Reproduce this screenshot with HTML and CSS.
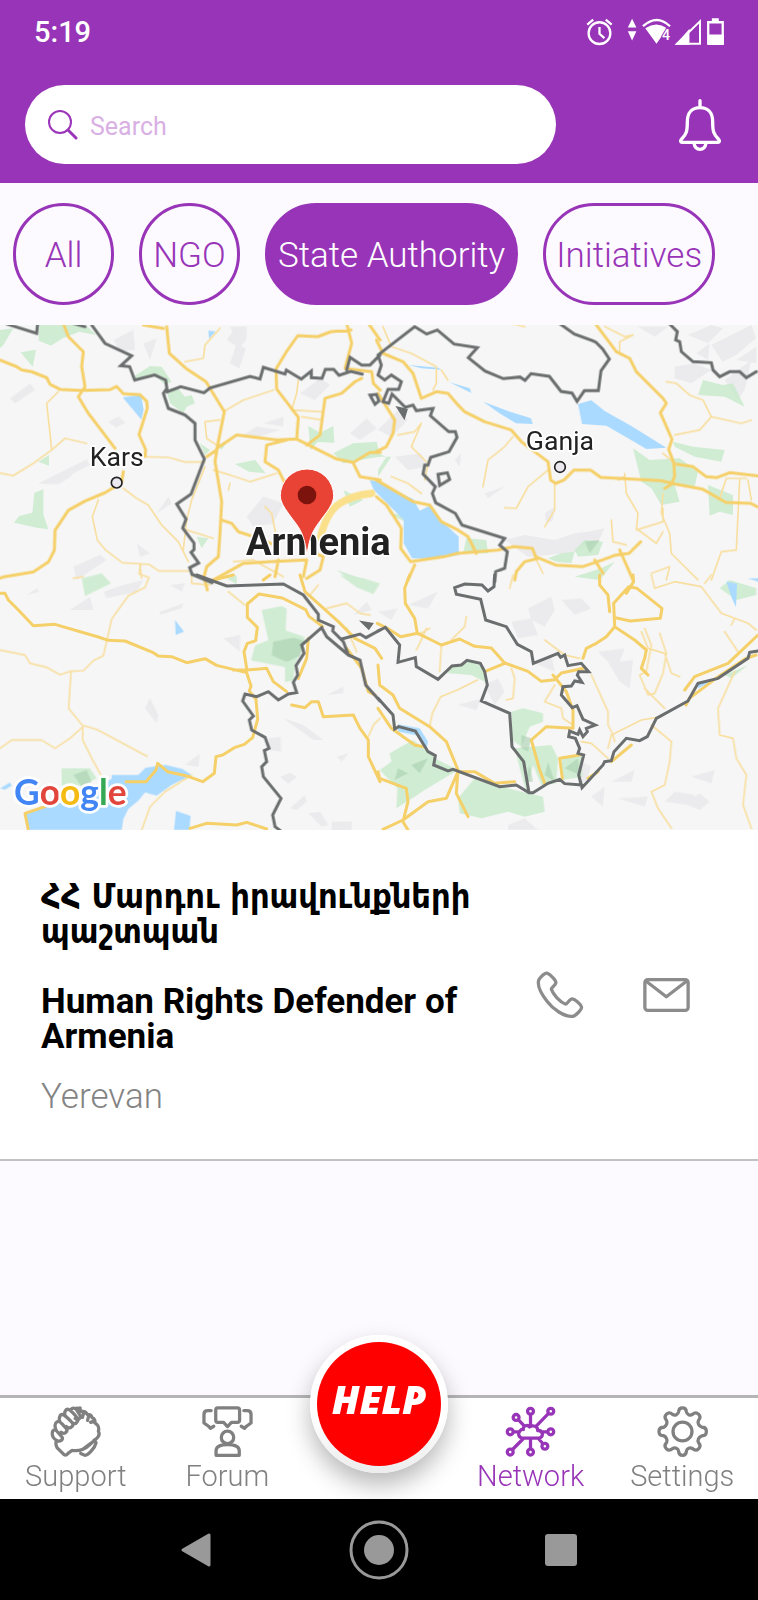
FILE: index.html
```html
<!DOCTYPE html>
<html lang="en">
<head>
<meta charset="utf-8">
<meta name="viewport" content="width=device-width, initial-scale=1">
<title>Network</title>
<link rel="stylesheet" href="styles.css">
</head>
<body>
<header class="header">
  <div class="status">
    <span class="time">5:19</span>
    <svg class="status-icons" viewBox="76 50 422 88" aria-hidden="true">
      <g fill="none" stroke="#fff" stroke-width="7">
        <circle cx="117" cy="99" r="33"/>
        <path d="M117 80v21l15 13M80 73l18-15M136 58l18 15"/>
        <path d="M249 78q42-38 82 0" stroke-width="7"/>
        <path d="M422 63v68h-70z" stroke-width="6"/>
        <path d="M447 66h44v65h-44z" stroke-width="7"/>
      </g>
      <path fill="#fff" d="M216 55l13 27h-26zM203 93h26l-13 28zM256 84q34-22 66 0l-8 10-12 20-12 17zM348 134l42-48v48zM458 54h21v10h-21zM446 103h48v32h-48z"/>
      <text x="307" y="119" class="wifi-mark">4</text>
    </svg>
  </div>
  <div class="search-row">
    <label class="search">
      <svg viewBox="0 0 30 30" width="30" height="30" aria-hidden="true"><circle cx="12" cy="12" r="11" fill="none" stroke="#9a34b8" stroke-width="2"/><path d="M20 20l8 8" stroke="#9a34b8" stroke-width="3" stroke-linecap="round"/></svg>
      <input type="search" placeholder="Search" aria-label="Search">
    </label>
    <button class="bell" aria-label="Notifications">
      <svg viewBox="356 295 126 156" width="42" height="52"><path d="M419 300v19M419 321c-26 0-38 18-38 42 0 30-3 38-17 52-5 6-4 10 2 10h106c6 0 7-4 2-10-14-14-17-22-17-52 0-24-12-42-38-42zM401 428c4 24 32 24 36 0" fill="none" stroke="#fff" stroke-width="10" stroke-linecap="round" stroke-linejoin="round"/></svg>
    </button>
  </div>
</header>

<nav class="chips" aria-label="Categories">
  <button class="chip">All</button>
  <button class="chip">NGO</button>
  <button class="chip active" aria-pressed="true">State Authority</button>
  <button class="chip">Initiatives</button>
</nav>

<svg class="map" viewBox="0 0 2274 1515" role="img" aria-label="Map of Armenia">
  <rect width="2274" height="1515" fill="#f6f6f6"/>
  <!-- terrain shading -->
  <g class="hill">
    <g transform="translate(0 -15)">
      <path d="M340 60l60-30 5 60-45 5zM680 60l30-40 25 30-15 35zM430 70l40-15-20 65zM30 235l60-45 15 20-60 40zM325 305l30-15 22 18-30 15zM115 490l90-45 60-30-60 60-30 18zM260 420l-40 40 50-25zM900 220l60-45 30 20-45 45zM720 350l50-30 70 10-80 25zM790 310l60-20v30zM740 590l50-60 60 20-30 60-60 10zM220 740l80-35 20 15-90 60zM410 670l40 30-30 10zM470 580l35-50 10 20zM690 130l20-60 28 15-20 60zM1050 340l50-45 30 30-50 35zM690 20h50v40l-20 20z"/>
    </g>
    <g transform="translate(1134 -15)">
      <path d="M380 660l60-15 90 15 60-20 40-5 50-10-20 40-60 30-90 10-60 5zM890 140l60-10 50 20-60 40-50-15zM930 45l70-30 35 10-45 45zM1000 75l60-30 60-30 14 40-60 50-40 20zM955 100l40-30-5 50zM1075 120l60-40v50zM1040 180l80-60-20 90-20 30zM500 580l30-20-5 40-20 12zM320 520l60-20-50 35zM230 420l20-20-5 40zM780 20h90l-40 30zM0 330l60-60 30 30-50 50zM50 410l80-10 20 40-60 10z"/>
    </g>
    <g transform="translate(0 750)">
      <path d="M310 50l60-20 60-15-20 35-90 20zM210 105l60-40 10 40zM80 60l30-20 8 10zM480 110l70-25-5 15-65 20zM670 190l50-10v50zM435 400l15-30 25 50-5 25zM850 430l60 20 60 45h-30zM555 570l45-35-5 40zM805 490l38-5v45l-35-5zM840 605l30-12 20 12-25 22zM870 700l45-40 5 20-30 25zM1010 545l35-10-20 25zM925 715l35-5 25 40-20 5zM980 360l50-25v20zM1060 120l40-40 15 25zM510 30l45-5-10 25zM995 740h60v25h-60z"/>
    </g>
    <g transform="translate(1134 750)">
      <path d="M450 100l70-35 10 40-30 50-40-20zM550 75l60-5 30 30-50 20zM400 140l60-10 20 50-60 10zM660 230l80-10-15 40 40-5-10 85-30-20-35-60zM320 330l40-20 20 40-30 40zM460 260l60-20 10 50zM600 555l40 20-15 40-25 20zM640 665l40-30-5 60zM700 620l70-35-10 35zM720 670l90-5-10 30zM860 680l30-30 60 10-20 30zM915 685l50-30 30 25-30 25zM940 605l70-20-10 40zM390 750l50-20 40 35h-90zM240 390l70-20-15 35zM90 90l90-40-30 50zM0 110l60-10-20 35z"/>
    </g>
  </g>
  <!-- forests -->
  <g class="park">
    <g transform="translate(0 -15)">
      <path d="M0 30l40-5-30 50-10 10zM118 15h140l30 30-50-10-50 20-35 22-37-15zM62 97l46-8-10 52zM103 518l27-10v75l15 45-35-5-68-15 15-20 40-10zM115 425l32-20v32zM400 170l50-32 35 2 30 45-20 10-30-30-60 15zM500 210l30-10 25 30 20-5 10 25-25 10-10 20-40-30zM925 318l35 20 40-20 3 50-50-2-22 25zM1000 400l60-30 70-5 10 45-60 10-50 10zM705 432l60-12 32 40-50-5zM600 370l30 20-15 15zM655 375l30-15-20 30zM590 650l35 5-20 30zM1030 510l60 30-40 20zM1010 750l60 20 30 10h-50z"/>
    </g>
    <g transform="translate(1134 -15)">
      <path d="M975 180l60 15 30-5 35 70-60-30-80-5zM885 365l60 15 95 10-10 35-80-15-60-30zM765 385l50 35 90-5 55 40-10 45-60-5 15 50-55 10-30-50-30-20zM990 495l75 30v60l-40-10-30 12zM0 410h40l-40 60zM0 400v50l25-40zM265 655l60 5 5 40h-75zM590 690l30-30 55 5-15 40-60 5zM510 715l40-15 40-5-10 35-45-5zM590 770l80-25 40-20-45 55zM30 580l50 5v20z"/>
    </g>
    <g transform="translate(0 750)">
      <path d="M785 105l60-12 15 8-3 65 58 20-15 50-15 30-5 50-25 5v-45l-102-20 12-45 40-15zM245 10l60-15 28 30-78 38zM185 580h85l20 30-45 22h-60zM1020 0l70 10 50 15-20 32-50-20zM680 10l30-10v28z"/>
    </g>
    <g transform="translate(1134 750)">
      <path d="M215 280l60-20 45 15v45l-40-20-70-5zM35 535l70-40 75 60 60 30-100 60-30 20-55 35 3-60-53-55 35-25zM240 670l50-60 60 20 100 25 45 10 5 45-60 15-50-15-80 20-65-15zM400 410l35-10 60 15v25l-40 15-25 60-28-20zM410 520l110-10 20 40-5 75-45 5-25-60-20 80-20-70zM550 545l60-5 3 65-60 10zM1025 40l30-25 80 25v20l-60 15zM1040 300l70-30-50 40zM590 5l70-5v10z"/>
    </g>
  </g>
  <g class="park-deep">
    <path d="M820 950l60-12 35 10-15 45-40 18-45-20zM220 1350l40-15 15 35-30 15z"/>
    <path transform="translate(1134 750)" d="M100 570l50-20-25 45zM60 580l30 15-40 20zM430 480l30 10-10 40-20-10zM510 560l20 60-30-20zM560 580l40-30 5 50zM440 620l15-50 10 50z"/>
    <path transform="translate(1134 -15)" d="M620 665l45-5-30 40z"/>
  </g>
  <!-- lakes -->
  <g class="water">
    <g transform="translate(0 -15)"><path d="M368 232l55-8 8 45-7 30zM625 32l22 2-20 22z"/></g>
    <g transform="translate(1134 -15)"><path d="M-25 480l30 5 50 30 50 22 20 35 30-15 35 45 52 48v55l-75 12-65-2-25-45v-70l-50-50-40-40zM90 135l90 8 10 6-60-4zM215 187l60 18 5 14zM316 245l80 30 63 20 5 17-50-2-50-30zM600 252l40-11 40 32 80 45 105 65-60 4-60-35-60-35-73-5z"/></g>
    <g transform="translate(0 750)"><path d="M525 135l27 35-25 10zM0 640l30-18 5 10-20 12zM335 600h80l22-22 60-8 50 12 28 18-60 30-45 32-35-10-20 25-30 25-15 30-5 33H85l-10-50 60-20 80-20 60-20 60-45zM528 708l44 15-4 42h-46z"/></g>
    <g transform="translate(1134 750)"><path d="M60 448l65 12 25 40-5 25-30-45-55-10zM1045 20l32 6-3 70-12-25zM1110 10h30v10zM960 325l60-15-60 30z"/></g>
  </g>
  <!-- minor roads -->
  <g class="minor">
    <g transform="translate(0 -15)">
      <path d="M175 215l-35 35 10 90 5 50-55 40-60 37-40-8M155 390l40-35 65 15M435 410l70 2 50 14h60M370 505l40 30 35 20 40 60 50 50 30 60M295 540l-18 50 15 70 25 30 50 38 80 5 30 20h90M660 25l-45 50-5 40-55 10M820 210l-90 30-60 35M660 300l-45 5 5 50 30 20M640 450l50 15 60 20 80-25M690 490l-5 20M615 440l-40 100-15 60-10 90M795 560l20 20 12 60M895 180l-5 40-15 50 90 5M905 290l60 10M560 630l80 25M420 735l5 40M700 725l60-5 90 50"/>
    </g>
    <g transform="translate(1134 -15)">
      <path d="M15 20l25 60 60 20 75 40v50l-10 20M190 150l20 30M405 350l-25 30-50 40-15 80M510 450l-60 50-35 65-35-2M530 490v80l-30 50M60 345l50-10 20-25M130 310l-30 70 50 50-10 50M40 470l50 20 40 30M740 460l5 60 35 60-5 50 80-25v-40M775 625l60 45 20-35M855 520l-5 60 25 60 5 60 80 80M700 600l5 65 40 10M680 20l60 30 25-5-40 20v30M865 185l30 5 40 35 40 15 25 50-35 40-75 15M1000 290l90 20 30-10M1105 475h-60l-20 60M1085 480l-10 210-45 5-30 85M1110 480l10 60M820 760l55-20-10 40M855 400l35 30M740 470l-20 10M475 720l20 40M400 10l40 10"/>
    </g>
    <g transform="translate(0 750)">
      <path d="M0 225l75 15 15 25 50 12 40 22 30-10 40-2 30-30 30-15 25-110 50-70 50-25 12-30-30-10 5-30M213 290l-7 110 42 52M0 520l35-25h90l40 25 45-30 42-38 40 12 150 80M248 455v40l30 60 25 45M575 600l-80 50-45 45-25 70M220 10l30-5M575 0v25l55 5M685 50l50 40M980 100l60-15 40 30 30 5M1140 430l-20 20-15 35M930 60l25-30M1040 160l30 70"/>
    </g>
    <g transform="translate(1134 750)">
      <path d="M155 455l8-40 25-50 50-20 60-30M115 225l10-20 20-45M120 180l35-20M185 290l5-80M400 280l10 30-5 60-20 5M265 125l-5 30-40 40M500 195l60 45 45 10M640 300l50 110v40l15 30 5 20M700 480l90-45 60-10M530 330l-30 50 50 20 5 30 30 20M610 500l30 5 50 45M690 520l10-40M820 450l60 50-5 60-15 70-40 20 20 50 40 60M1070 290l-50 110 5 80 40 10 10 60 30 50-10 90 25 70M820 0l10 40 60-20 80 15 60 80 80 30 25 20M790 170l20 50 50 15 20 60 25 10M805 290l-20 10 25 60 20-5 25-60 10-60-20-60M800 340l60 60M1040 170l40 60M800 160l20 50-15 80M1060 150l10-20M1000 0l-20 25M395 40l10-40"/>
    </g>
  </g>
  <!-- major roads -->
  <g class="major">
    <g transform="translate(0 -15)">
      <path d="M0 120l50 20 15 10 30 5 45 18 10 20 30 15 60 3 90-2 20-10 20 22 50 3 20 20 2 20-25 80 20 45-2 20M190 10l15 40 45 45-5 45 10 60-20 30 30 50 80 105M370 455l-5 30-20 15-30 18-60 25-50 28-40 60-2 60-18 35-45 30-90 15-15 5M500 20l8 80 50 45 60 40 15 25 40 65-10 50-10 50-8 50 20 120-5 95-5 70-35 30-8 30 10 40M490 25l-60-10M650 385l60-40 120 15 60-3 5-65-65-85-2-60 30-50 35-50 60 3 40-15 60-5M890 357l120 60 50 10 50-30h30M920 375l40-30 15-110 50-15 40-35 20-10M860 360l-60 15-5 50 40 25 30 60M1040 10l15 60-20 75 80 10 5 35 20 20M1105 10l35 50M1060 430l20 40 60 10M650 390l-30 20M665 600l30 10 20 25 60 20 50 20M640 780l90-50 80-5 110-5-10 50M945 700l25 10-10 40-40 25M835 720l-10 50"/>
    </g>
    <g transform="translate(1134 -15)">
      <path d="M-5 60l20 40 60 25 30 35 25 75 45-20 35 5 30 35 20 20 60 30 80 25 30 35 80 60 8 55 15 10 25-10 30-30h50l30 22 180 10 45 10 80 15 70 40 75 3 20 10M655 15l60 80 40 20 20 40 80 80 10 15-18 28 35 80-10 30 15 40 3 40-10 25-20 12M895 432l50 8 40 30 30 3 40-15 90 10M-5 480l60 35 50 30 50 10 35 50 50 25 30 20 25 50M-5 530l30 25 20 30 25 40-2 60 30 40 100-15 40-10 120-10 50-10 55 5 10 25 60 25 80 5 60-20 40-15 40-5 35-35M725 690l40 90M650 720l25 40M480 715l-40 10-25 30-5 25M110 735l-20 45M-5 395l30-15 20-40 5-40-50-80"/>
    </g>
    <g transform="translate(0 750)">
      <path d="M0 55h15l10 20 30 30 45 47 65-4 130 38 30 10 50 2 85 35 15 10 40 2 45 18 55-12 35 20 90 22 13 40-5 15 20 25 5 60-15 55-25 20-30 10-35 22-20 5-5 50-35 25-50-18-55-12-30-25-5 20-30 35h-60M700 285h40l60-5 20 40 40 30M740 280l-8-50 10-25 25-8 5-40-30-30 0-40 35-30 70 12 70 35 10 20 40 30M900 0l15 50 50 45 50 45 50 50 60 30 20 30M925 190l-5 60-25 60M875 390l40 8 20-18h20l15 45 90-5 20 40 25 35v50l35 75M1040 220l45 60 20 70 20 10M85 765l-10-50 60-20M570 760l50-15 90 5 30-8 60 20M640 15l60-15M790 15l20-15"/>
    </g>
    <g transform="translate(1134 750)">
      <path d="M95 0l-15 40 2 45 28 45 8 45-50 10-40-25-30-15M120 175l40 20 30 15 55-18 45 22 50 5 40 45 70 25 40 30 40-5 20-20 70-15M320 290l60-25M525 300l40 50 20 55v55l-80-5-45 40 25 90 15 40M605 540l-60 10 8 60M615 250l10-30 30-15 30-20 25-30-3-70 45-50 25 5 75 60-5 30-90 8-45-10M665 0v30l25 30 5 50M765 0l2 20-22 35M710 155l60 40 35 30-5 25-10 30 20 20M920 345l30-40 100-40 90-85M1134 240l-30 10-90 60-80 60-10 20M0 270l5 60 40 30 20 40 90 55 50 45 35 85-5 70 35 70M240 590h50l60 35 60-5M240 590l-35 80-55 10-75 55-60 28M0 590l5 20 80 30 5 40-15 60 15 25M0 400l40 60 70 50 25 5M700 560l60-50M630 610l30-20"/>
    </g>
  </g>
  <path class="expressway" d="M960 640q20-80 60-105t95-30"/>
  <!-- borders -->
  <g class="border">
    <g transform="translate(0 -15)">
      <path d="M20 12l90 28 3-30M220 10l35 10M275 15l40 55 80 37-33 30 27 3 15 40 60-15 33 15 5 35 40-15 70 18 18-14 120-35 30 8 10-35 65 20 4-12 45 27 30-24v20l32 2 10-27h25l16 18 35-12 35 8M497 210l-7 10 15 45 50 20 30 25v50l28 57-40 105-43 30 28 45-10 27 34 45v20l-9 8 23 32-27 14 7 20 60 25M1040 150l10-38 35 23h25l30-30M1110 225l15 28 12-10-8-20z"/>
    </g>
    <g transform="translate(1134 -15)">
      <path d="M0 105l110-85 36 22 32-12 50 42 70 11-27 30 50 40 55 23 50-5 15 10 18-20 55 8 35 45 33 5 15 25 22-32h42l8-60 25-35-20-30-20-20-10-5-55-20-45-32M0 105L10 135 0 165 20 180 40 165 70 185 62 208 30 208 15 245 32 250 42 222 82 262 105 255 115 272 165 265 157 287 212 335 232 335 237 352 213 395 158 412 150 435 140 435 135 462 172 500 163 520 173 548 232 580 252 615 380 655 365 675 388 695 380 745 353 755 350 785M180 463l28-5 7 20-30 18zM873 10l25 25-5 25 12 5 5 30 35 30 55 3 5 22 20 20 30-15h30l20 18 30-18"/>
    </g>
    <g transform="translate(0 750)">
      <path d="M590 0L680 33 850 27 910 60 955 118 955 135 1000 155 998 168 1030 200 1045 240 1080 255 1097 330 1140 378M1045 240L980 185 965 158 905 210 912 235 888 272 893 300 880 322 890 353 865 357 835 375 805 350 770 365 735 357 728 378 760 423 748 435 755 465 795 487 807 520 793 527 800 560 785 575 790 605 843 670 818 720 825 755 845 770M1025 192L1080 177 1098 188 1140 165"/>
    </g>
    <g transform="translate(1134 750)">
      <path d="M0 168L22 157 65 210 60 262 112 248 115 275 180 313 222 273 250 270 267 256 307 265 320 290 328 330 310 378 395 415 402 515 437 560 453 653M350 0L348 35 330 48 312 30 260 27 230 38 235 58 308 73 323 135 385 155 418 208 460 230 466 265 540 235 548 247 560 240 570 272 610 265 632 290 602 290 598 300 612 322 590 318 580 333 555 335 550 360 583 398 597 392 615 433 652 450 625 460 628 470 615 485 605 465 600 478 575 468 572 485 592 490 605 520 600 535 617 540 602 600 612 638 675 570 680 560 700 557 708 530 745 490 785 497 808 485 835 430 930 378 960 325 1020 310 1110 250 1115 232 1140 228M0 370L45 420 50 462 62 455 112 468 150 530 172 542 167 570 210 588 225 583 365 635 415 630 453 653 465 653 510 625 545 613 560 626 612 630"/>
    </g>
    <path class="border-fill" d="M1090 893l24 4-8 12zM1196 250l22 5-6 20z"/>
  </g>
  <!-- places and pin -->
  <g class="city"><circle cx="350" cy="473" r="16"/><circle cx="1680" cy="426" r="16"/></g>
  <text class="label" x="350" y="422" text-anchor="middle">Kars</text>
  <text class="label" x="1680" y="376" text-anchor="middle">Ganja</text>
  <text class="label country" x="955" y="690" text-anchor="middle">Armenia</text>
  <path d="M921 692c-8-64-20-80-48-116-18-25-32-44-32-64a80 80 0 0 1 160 0c0 20-14 41-32 64-28 38-40 52-48 116z" fill="#e94335" stroke="#fff" stroke-width="3"/>
  <circle cx="921" cy="510" r="28" fill="#7c130c"/>
  <text class="google" x="42" y="1440"><tspan fill="#4285f4">G</tspan><tspan fill="#e2453c">o</tspan><tspan fill="#f5bb12">o</tspan><tspan fill="#4285f4">g</tspan><tspan fill="#35a853">l</tspan><tspan fill="#e2453c">e</tspan></text>
</svg>

<main class="results">
  <article class="card">
    <div class="info">
      <h2 class="name native" lang="hy">ՀՀ Մարդու իրավունքների պաշտպան</h2>
      <h2 class="name">Human Rights Defender of Armenia</h2>
      <p class="place">Yerevan</p>
    </div>
    <div class="actions">
      <button class="action" aria-label="Call">
        <svg viewBox="50 60 145 146" width="48" height="48"><path d="M57 92c-2-5 18-28 27-25 8 3 26 20 26 28s-15 16-14 20c5 16 26 40 44 46 4 0 12-17 20-16s26 16 28 25c1 7-18 27-27 28-26 2-60-22-78-46-20-26-28-48-26-60z"/></svg>
      </button>
      <button class="action" aria-label="Email">
        <svg viewBox="370 82 141 103" width="47" height="34"><rect x="375" y="87" width="131" height="93" rx="9"/><path d="M378 91l62 48 62-48"/></svg>
      </button>
    </div>
  </article>
</main>

<nav class="tabs" aria-label="Main">
  <a class="tab" href="#support">
    <svg viewBox="150 256 154 156"><path d="M169 361c-3 8-3 15 2 23l21 21c5 3 9 0 12-4l12-9c26 3 41-4 55-18l18-16c11-9 13-16 8-25 2-7 1-14-3-19l-8-7c2-7-2-14-8-15-2-7-8-10-14-9-4-8-12-12-19-10-3-7-9-12-16-10M169 361c-11-6-14-14-13-23 0-8 7-11 12-7l17 19c7 9-5 17-16 11zM168 331c-6-13-4-24 3-27 6-3 11 2 15 7l13 14c6 9-6 20-16 11M179 304c-4-10 0-22 8-22 6 0 30 23 32 29 2 9-12 17-20 8M195 284c-3-10 2-19 10-18 7 2 27 24 29 31 2 9-9 17-17 10M212 268c4-7 12-7 18-1l11 18c3 9-8 17-15 9M232 268l9-6M252 278l-4 13M267 288l-3 12M282 303l-9 3M243 401l13 6c9-1 30-21 34-38l-6-9M250 388l32-24"/></svg>
    <span>Support</span>
  </a>
  <a class="tab" href="#forum">
    <svg viewBox="604 256 156 156"><path d="M652 262h60c5 0 7 2 7 7v30c0 5-2 7-7 7h-18l-12 13-12-13h-18c-4 0-6-2-6-7v-30c0-5 2-7 6-7zM632 270h-10c-7 0-12 4-12 11v27l14 10 6 6 10-6M732 270h10c7 0 12 4 12 11v27l-14 10-6 6-10-6"/><circle cx="682" cy="352" r="19"/><path d="M647 407v-14c0-12 10-19 35-19s36 7 36 19v14z"/></svg>
    <span>Forum</span>
  </a>
  <span class="tab-gap"></span>
  <a class="tab current" href="#network" aria-current="page">
    <svg viewBox="380 256 156 156"><path d="M458 285v30M511 281l-34 35M422 299l16 17M408 335h15M493 335h15M435 357l-32 32M458 355v30M482 355l12 14M432 354c-11-2-13-14-6-22 2-3 6-5 10-4-2-12 14-16 19-8 12-8 26 0 25 11 18-1 18 20 5 23z"/><circle cx="458" cy="272" r="9"/><circle cx="520" cy="272" r="9"/><circle cx="414" cy="291" r="9"/><circle cx="396" cy="335" r="9"/><circle cx="520" cy="335" r="9"/><circle cx="396" cy="397" r="9"/><circle cx="458" cy="397" r="9"/><circle cx="502" cy="379" r="9"/></svg>
    <span>Network</span>
  </a>
  <a class="tab" href="#settings">
    <svg viewBox="834 256 156 156"><circle cx="912" cy="334" r="29"/><path d="M900 274q1-12 12-12t12 12c1 8 11 12 18 8 9-8 15-5 19-1s8 10 0 19c-4 7 0 17 11 21 10 0 13 7 13 13s-3 13-13 13c-11 4-15 14-11 21 8 9 4 15 0 19s-10 7-19-1c-7-4-17 0-18 8q-1 13-12 13t-12-13c-1-8-11-12-18-8-9 8-15 5-19 1s-8-10 0-19c4-7 0-17-8-21-13 0-15-7-15-13s2-13 15-13c8-4 12-14 8-21-8-9-4-15 0-19s10-7 19 1c7 4 17 0 18-8z"/></svg>
    <span>Settings</span>
  </a>
  <button class="help">HELP</button>
</nav>

<div class="system">
  <button aria-label="Back"><svg viewBox="0 0 60 60"><path d="M16 30L42 15V45z" stroke="#999" stroke-width="3" stroke-linejoin="round"/></svg></button>
  <button aria-label="Home"><svg viewBox="0 0 60 60"><circle cx="30" cy="30" r="28" fill="none" stroke="#999" stroke-width="3"/><circle cx="30" cy="30" r="15"/></svg></button>
  <button aria-label="Recent apps"><svg viewBox="0 0 60 60"><rect x="14" y="14" width="32" height="32" rx="3"/></svg></button>
</div>
</body>
</html>
```

FILE: styles.css
```css
* { box-sizing: border-box; }
body {
  margin: 0;
  min-height: 100vh;
  display: flex;
  flex-direction: column;
  background: #fcfaff;
  font-family: Roboto, "Liberation Sans", sans-serif;
}
button { font: inherit; border: 0; padding: 0; background: none; cursor: pointer; }
svg { display: block; }

.header { background: #9834b7; color: #fff; padding-bottom: 19px; }
.status {
  display: flex;
  align-items: center;
  justify-content: space-between;
  height: 62px;
  padding: 0 32px 0 34px;
}
.time { font-size: 29px; line-height: 34px; font-weight: 500; padding-top: 2px; }
.status-icons { width: 141px; height: 29px; }
.wifi-mark { font-size: 43px; font-weight: 500; fill: #fff; stroke: #9834b7; stroke-width: 6px; paint-order: stroke; }

.search-row {
  display: flex;
  align-items: center;
  justify-content: space-between;
  padding: 23px 37px 0 25px;
}
.search {
  display: flex;
  align-items: center;
  gap: 12px;
  width: 77%;
  max-width: 531px;
  height: 79px;
  padding: 0 23px;
  border-radius: 40px;
  background: #fff;
}
.search input {
  flex: 1;
  min-width: 0;
  border: 0;
  outline: 0;
  padding: 4px 0 0;
  background: none;
  font: 400 25px Roboto, sans-serif;
  color: #9834b7;
}
.search input::placeholder { color: #d9b0e4; opacity: 1; }

.chips { display: flex; gap: 25px; padding: 20px 13px; overflow: hidden; }
.chip {
  flex: none;
  min-width: 101px;
  height: 102px;
  padding: 2px 10px 0;
  border: 3px solid #9834b7;
  border-radius: 51px;
  color: #9834b7;
  font-size: 35px;
  font-weight: 300;
  white-space: nowrap;
}
.chip.active { background: #9834b7; color: #fff; }

.map { width: 100%; height: auto; overflow: hidden; }
.hill { fill: #e9e8ea; opacity: .8; }
.park { fill: #c9ebcd; opacity: .85; }
.park-deep { fill: #a9cfb0; opacity: .6; }
.water { fill: #aadaff; }
.minor, .major, .border, .expressway { fill: none; stroke-linejoin: round; stroke-linecap: round; }
.minor { stroke: #f8dfa0; stroke-width: 5px; }
.major { stroke: #f5cf68; stroke-width: 9px; }
.expressway { stroke: #fbe08b; stroke-width: 22px; }
.border { stroke: #6b6e6e; stroke-width: 9px; stroke-linejoin: miter; }
.border-fill { fill: #6b6e6e; }
.city { fill: #eceaf0; stroke: #222; stroke-width: 5px; }
.label { font-size: 80px; fill: #222; stroke: #fff; stroke-width: 10px; stroke-linejoin: round; paint-order: stroke; }
.country { font-size: 114px; font-weight: 700; }
.google { font-family: Lato, sans-serif; font-size: 106px; font-weight: 700; stroke: #fff; stroke-width: 16px; stroke-linejoin: round; paint-order: stroke; }

.results { flex: 1; }
.card {
  display: flex;
  align-items: center;
  padding: 49px 39px 45px 41px;
  background: #fff;
  border-bottom: 2px solid #c2c1c5;
}
.info { flex: 1; min-width: 0; }
.name { margin: 0 0 25px; font-size: 35px; line-height: 35px; font-weight: 700; color: #000; }
.native { margin-bottom: 35px; font-family: "DejaVu Sans Condensed", "DejaVu Sans", sans-serif; font-size: 34px; }
.place { margin: 0; font-size: 35px; line-height: 35px; font-weight: 300; color: #838383; }
.actions { display: flex; flex: none; padding-bottom: 4px; }
.action { width: 106px; height: 80px; display: grid; place-items: center; }
.action svg { fill: none; stroke: #8c8c8c; stroke-width: 10px; stroke-linejoin: round; }

.tabs {
  position: relative;
  display: grid;
  grid-template-columns: repeat(5, 1fr);
  height: 104px;
  border-top: 3px solid #b5b5b8;
  background: #fff;
}
.tab {
  display: flex;
  flex-direction: column;
  align-items: center;
  padding-top: 8px;
  gap: 2px;
  font-size: 29px;
  line-height: 34px;
  font-weight: 300;
  color: #808080;
  text-decoration: none;
}
.tab svg { width: 51px; height: 51px; fill: none; stroke: currentColor; stroke-width: 10px; stroke-linejoin: round; stroke-linecap: round; }
.current { color: #9834b7; }
.help {
  position: absolute;
  left: 50%;
  top: -63px;
  width: 138px;
  height: 138px;
  margin-left: -69px;
  padding-bottom: 11px;
  border: 7px solid transparent;
  border-radius: 50%;
  background: linear-gradient(#f00, #f00) padding-box, linear-gradient(#fff 60%, #ececec) border-box;
  box-shadow: 0 12px 24px rgba(0, 0, 0, .28);
  color: #fff;
  font: italic 800 39px/1 "Open Sans", sans-serif;
}

.system {
  display: grid;
  grid-template-columns: repeat(3, 24%);
  justify-content: center;
  align-items: center;
  height: 101px;
  background: #000;
}
.system button { display: grid; place-items: center; }
.system svg { width: 60px; height: 60px; fill: #999; }
```
